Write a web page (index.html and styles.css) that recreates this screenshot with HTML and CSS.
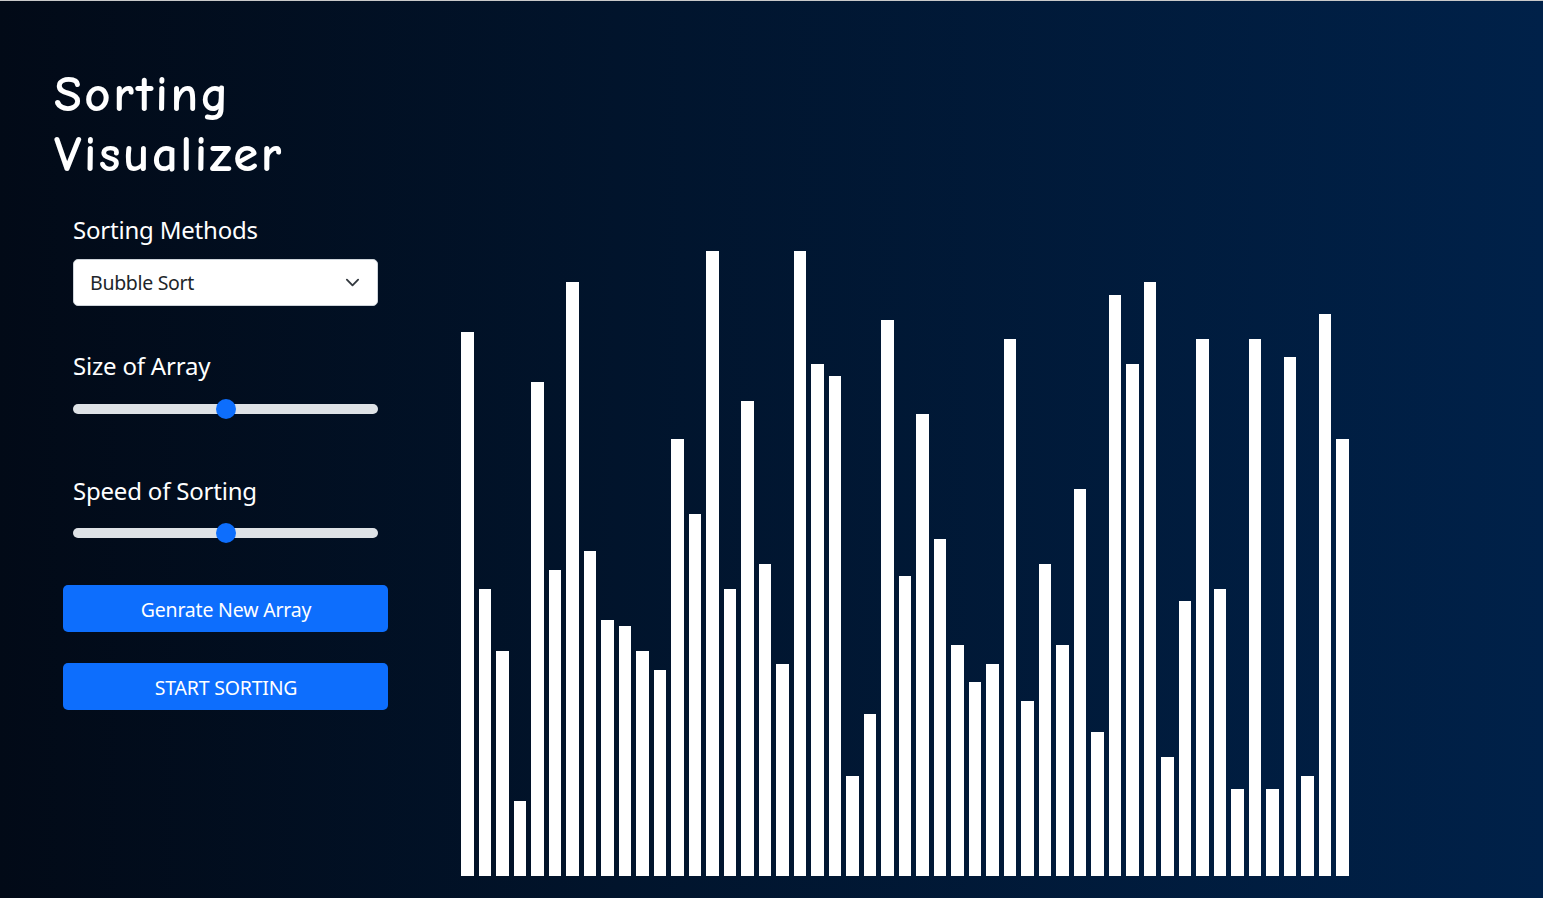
FILE: index.html
```html
<!DOCTYPE html>
<html lang="en">
<head>
<meta charset="utf-8">
<title>Sorting Visualizer</title>
<link rel="stylesheet" href="styles.css">
</head>
<body>
<div class="page">
  <aside class="panel">
    <h1 class="title">Sorting<br>Visualizer</h1>
    <div class="controls">
      <label class="label label-methods" for="method">Sorting Methods</label>
      <div class="select">
        <span class="select-text">Bubble Sort</span>
        <svg class="chevron" viewBox="0 0 16 16" width="15" height="15"><path d="m2 5 6 6 6-6" fill="none" stroke="#343a40" stroke-width="2" stroke-linecap="round" stroke-linejoin="round"/></svg>
      </div>
      <div class="label label-size">Size of Array</div>
      <div class="range range-size"><div class="track"></div><div class="thumb"></div></div>
      <div class="label label-speed">Speed of Sorting</div>
      <div class="range range-speed"><div class="track"></div><div class="thumb"></div></div>
    </div>
    <div class="buttons">
      <button class="btn btn-generate">Genrate New Array</button>
      <button class="btn btn-start">START SORTING</button>
    </div>
  </aside>
  <main class="visual">
    <div class="bars">
      <div class="bar" style="height:543.75px"></div>
      <div class="bar" style="height:287.5px"></div>
      <div class="bar" style="height:225px"></div>
      <div class="bar" style="height:75px"></div>
      <div class="bar" style="height:493.75px"></div>
      <div class="bar" style="height:306.25px"></div>
      <div class="bar" style="height:593.75px"></div>
      <div class="bar" style="height:325px"></div>
      <div class="bar" style="height:256.25px"></div>
      <div class="bar" style="height:250px"></div>
      <div class="bar" style="height:225px"></div>
      <div class="bar" style="height:206.25px"></div>
      <div class="bar" style="height:437.5px"></div>
      <div class="bar" style="height:362.5px"></div>
      <div class="bar" style="height:625px"></div>
      <div class="bar" style="height:287.5px"></div>
      <div class="bar" style="height:475px"></div>
      <div class="bar" style="height:312.5px"></div>
      <div class="bar" style="height:212.5px"></div>
      <div class="bar" style="height:625px"></div>
      <div class="bar" style="height:512.5px"></div>
      <div class="bar" style="height:500px"></div>
      <div class="bar" style="height:100px"></div>
      <div class="bar" style="height:162.5px"></div>
      <div class="bar" style="height:556.25px"></div>
      <div class="bar" style="height:300px"></div>
      <div class="bar" style="height:462.5px"></div>
      <div class="bar" style="height:337.5px"></div>
      <div class="bar" style="height:231.25px"></div>
      <div class="bar" style="height:193.75px"></div>
      <div class="bar" style="height:212.5px"></div>
      <div class="bar" style="height:537.5px"></div>
      <div class="bar" style="height:175px"></div>
      <div class="bar" style="height:312.5px"></div>
      <div class="bar" style="height:231.25px"></div>
      <div class="bar" style="height:387.5px"></div>
      <div class="bar" style="height:143.75px"></div>
      <div class="bar" style="height:581.25px"></div>
      <div class="bar" style="height:512.5px"></div>
      <div class="bar" style="height:593.75px"></div>
      <div class="bar" style="height:118.75px"></div>
      <div class="bar" style="height:275px"></div>
      <div class="bar" style="height:537.5px"></div>
      <div class="bar" style="height:287.5px"></div>
      <div class="bar" style="height:87.5px"></div>
      <div class="bar" style="height:537.5px"></div>
      <div class="bar" style="height:87.5px"></div>
      <div class="bar" style="height:518.75px"></div>
      <div class="bar" style="height:100px"></div>
      <div class="bar" style="height:562.5px"></div>
      <div class="bar" style="height:437.5px"></div>
    </div>
  </main>
</div>
</body>
</html>
```
FILE: styles.css
```css
* { box-sizing: border-box; }
html, body { margin: 0; padding: 0; }
body {
  height: 898px;
  overflow: hidden;
  border-top: 1px solid #c9c9c9;
  background: linear-gradient(to right, #020a17 0%, #01142c 40%, #002149 100%);
  font-family: "Noto Sans", "Open Sans", sans-serif;
  color: #fff;
}
.page {
  display: flex;
  height: 897px;
}
.panel {
  flex: none;
  width: 440px;
  padding-top: 64px;
  display: flex;
  flex-direction: column;
}
.title {
  margin: 0 0 0 54px;
  font-family: "Comic Sans MS", "Comic Neue", "DejaVu Sans", sans-serif;
  font-weight: 700;
  font-size: 51px;
  line-height: 60px;
  letter-spacing: 2.5px;
  color: #fff;
}
.controls {
  margin-left: 73px;
  width: 305px;
  display: flex;
  flex-direction: column;
}
.label {
  font-size: 24px;
  line-height: 30px;
  color: #fff;
  letter-spacing: -0.2px;
}
.label-methods { margin-top: 30px; }
.select {
  margin-top: 14px;
  height: 47px;
  background: #fff;
  border: 1px solid #ced4da;
  border-radius: 5px;
  display: flex;
  align-items: center;
  justify-content: space-between;
  padding: 0 17.5px 0 16px;
}
.select-text {
  font-size: 19.5px;
  color: #212529;
  letter-spacing: -0.3px;
}
.chevron { display: block; }
.label-size { margin-top: 45px; }
.label-speed { margin-top: 57px; }
.range {
  position: relative;
  height: 20px;
  display: flex;
  align-items: center;
}
.range-size { margin-top: 18px; }
.range-speed { margin-top: 17px; }
.track {
  width: 100%;
  height: 10px;
  border-radius: 10px;
  background: #dee2e6;
}
.thumb {
  position: absolute;
  left: 142.5px;
  top: 0;
  width: 20px;
  height: 20px;
  border-radius: 50%;
  background: #0d6efd;
}
.buttons {
  margin-left: 63px;
  margin-top: 42px;
  width: 325px;
  display: flex;
  flex-direction: column;
  gap: 31px;
}
.btn {
  height: 47px;
  border: none;
  border-radius: 5px;
  background: #0d6efd;
  color: #fff;
  font-family: "Noto Sans", "Open Sans", sans-serif;
  font-size: 19.5px;
  letter-spacing: -0.2px;
  padding: 0 0 0 1px;
  line-height: 1;
  padding-top: 2px;
}
.visual {
  flex: 1;
  display: flex;
  align-items: flex-end;
  padding-left: 21px;
  padding-bottom: 22px;
}
.bars {
  display: flex;
  align-items: flex-end;
  gap: 5px;
}
.bar {
  width: 12.5px;
  background: #fff;
}
```
